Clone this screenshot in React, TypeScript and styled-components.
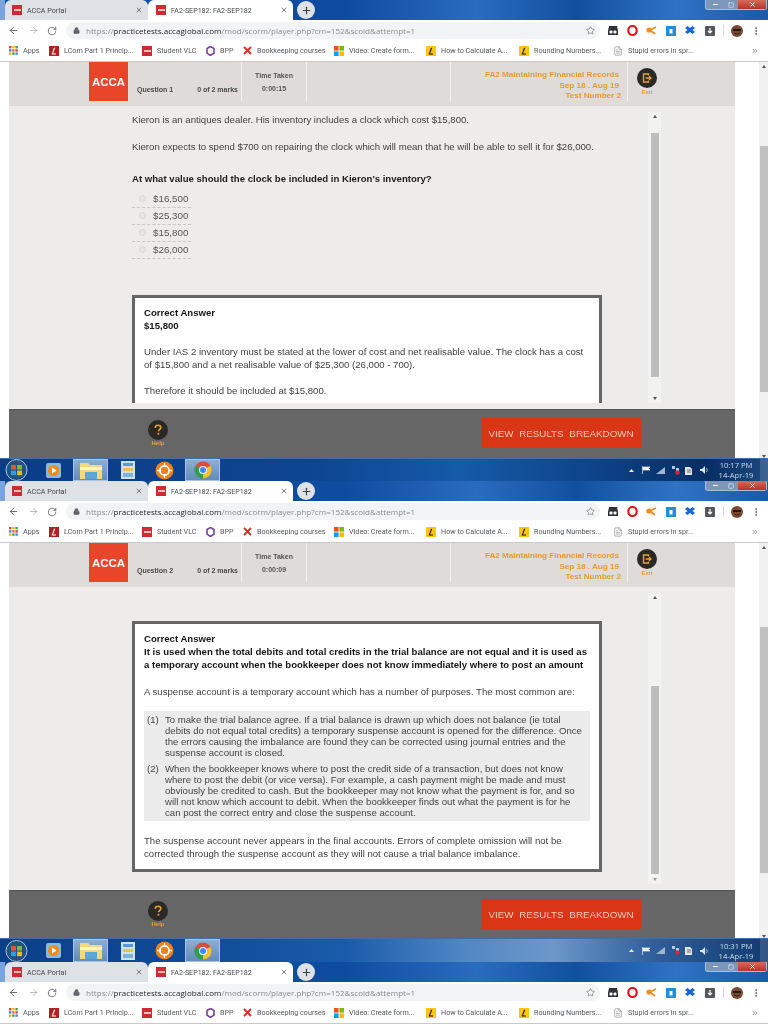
import React from "react";
import styled, { createGlobalStyle } from "styled-components";
import { ArrowLeft, ArrowRight, RotateCw, Lock, Star, Plus, X, FileText, MoreVertical, ChevronsRight, Minus, Square } from "lucide-react";

const Global = createGlobalStyle`
  html, body { margin: 0; padding: 0; background: #fff; }
  * { box-sizing: border-box; }
`;
const Screen = styled.div`
  width: 768px; height: 1024px; overflow: hidden; display: flex; flex-direction: column;
  font-family: "Liberation Sans", Arial, sans-serif; filter: blur(0.35px);
`;
const Shot = styled.section<{ $h: number }>`
  height: ${p => p.$h}px; flex: none; display: flex; flex-direction: column; background: #fff;
`;
const TabStrip = styled.div`
  height: 20px; flex: none; display: flex; align-items: stretch; padding-left: 5px;
  background: linear-gradient(90deg, #0c4ea5 0%, #0f4c9f 45%, #2a6cc0 62%, #12509f 75%, #2f72c4 88%, #1c5aa8 100%);
  box-shadow: inset 5px 0 0 #7ba4dc;
`;
const Tab = styled.div<{ $active?: boolean }>`
  width: ${p => (p.$active ? 145 : 143)}px; display: flex; align-items: center; gap: 5px; padding: 0 5px 0 ${p => (p.$active ? 8 : 7)}px;
  background: ${p => (p.$active ? "#fff" : "#dee1e6")}; border-radius: 6px 6px 0 0; color: #45484d;
  font: 7.1px Roboto, sans-serif;
`;
const Favicon = styled.span`
  width: 10px; height: 10px; background: #d02a33; flex: none; display: flex; align-items: center; justify-content: center;
  &::after { content: ""; width: 7px; height: 2px; background: #f3c0c0; }
`;
const TabTitle = styled.span` flex: 1; white-space: nowrap; overflow: hidden; `;
const NewTab = styled.span`
  width: 18px; height: 18px; margin: 1px 0 0 4px; border-radius: 50%; background: #dee1e6; display: flex; align-items: center; justify-content: center; color: #3c4043;
`;
const WinControls = styled.div`
  margin-left: auto; margin-right: 1px; width: 62px; height: 10px; display: flex; border: 1px solid #a9bdd6; border-top: 0; border-radius: 0 0 3px 3px; color: #fff; background: #7d97bb;
`;
const WinBtn = styled.span<{ $close?: boolean; $w: number }>`
  width: ${p => p.$w}px; display: flex; align-items: center; justify-content: center;
  background: ${p => (p.$close ? "linear-gradient(#d86a5e,#b8322a)" : "transparent")};
`;
const Toolbar = styled.div`
  height: 21px; flex: none; display: flex; align-items: center; background: #fff; padding-left: 8px; position: relative; color: #5f6368;
`;
const NavBtn = styled.span<{ $w: number; $faint?: boolean }>`
  width: ${p => p.$w}px; flex: none; display: flex; color: ${p => (p.$faint ? "#b5b8bc" : "#5f6368")};
`;
const Omnibox = styled.div`
  width: 534px; height: 17px; margin-left: -1px; flex: none; background: #f1f3f4; border-radius: 9px; display: flex; align-items: center; padding: 0 5px 0 7px; color: #5f6368;
  font: 8px "Open Sans", sans-serif; letter-spacing: 0.04px; white-space: nowrap;
`;
const Url = styled.span` margin-left: 6px; flex: 1; color: #8a8d91; `;
const Host = styled.span` color: #26282b; `;
const ExtIcons = styled.div`
  flex: 1; display: flex; align-items: center; height: 100%;
`;
const Ext = styled.span<{ $ml: number }>` margin-left: ${p => p.$ml}px; display: flex; flex: none; `;
const ExtDivider = styled.span` width: 1px; height: 11px; background: #d8d8d8; margin-left: 8px; flex: none; `;
const Bookmarks = styled.div`
  height: 21px; flex: none; display: flex; align-items: center; padding-left: 9px; background: #fff; border-bottom: 1px solid #c9c9c9;
  font: 7.2px Roboto, sans-serif; color: #55585c; padding-bottom: 1px;
`;
const Bookmark = styled.div<{ $w: number }>`
  width: ${p => p.$w}px; flex: none; display: flex; align-items: center; gap: 5px; white-space: nowrap; overflow: hidden;
`;
const More = styled.span` margin-left: auto; margin-right: 9px; display: flex; color: #66696d; `;
const Viewport = styled.div`
  flex: 1; min-height: 0; display: flex; padding-left: 9px;
`;
const Page = styled.div`
  width: 726px; flex: none; display: flex; flex-direction: column;
`;
const Gutter = styled.div` width: 24px; flex: none; `;
const OuterTrack = styled.div`
  width: 9px; flex: none; background: #f1f1f1; display: flex; flex-direction: column; align-items: center; padding-top: 3px;
`;
const Arrow = styled.span<{ $down?: boolean; $light?: boolean }>`
  width: 0; height: 0; flex: none; border-left: 2.5px solid transparent; border-right: 2.5px solid transparent;
  ${p => (p.$down ? `border-top: 3px solid ${p.$light ? "#999" : "#555"};` : `border-bottom: 3px solid #555;`)}
`;
const OuterThumb = styled.div<{ $top: number }>`
  width: 8px; height: 246px; margin-top: ${p => p.$top}px; margin-left: 1px; background: #c0c0c0;
`;
const HeaderBar = styled.header`
  height: 44px; flex: none; background: #dedbd8; display: flex; padding-left: 80px;
`;
const Logo = styled.div`
  width: 39px; height: 39px; background: #e9452a; color: #fff; display: flex; align-items: center; justify-content: center;
  font: bold 11.5px "Liberation Sans", sans-serif; flex: none;
`;
const QuestionInfo = styled.div`
  width: 114px; height: 39px; flex: none; display: flex; justify-content: space-between; padding: 23px 3px 0 9px; color: #4a4a4a;
  font: bold 7px/9px "Liberation Sans", sans-serif; border-right: 1px solid #f3f1ef; white-space: nowrap;
`;
const TimeBox = styled.div`
  width: 65px; height: 39px; flex: none; border-right: 1px solid #f3f1ef; text-align: center; padding-top: 7px; color: #555;
  font: bold 7px/13px "Liberation Sans", sans-serif; white-space: nowrap;
`;
const HeaderGap = styled.div` width: 144px; height: 39px; flex: none; border-right: 1px solid #f3f1ef; `;
const Course = styled.div`
  width: 177px; height: 39px; flex: none; border-right: 1px solid #f3f1ef; text-align: right; padding: 8px 6px 0 0; color: #e79a2e;
  font: bold 8.1px/10.5px "Liberation Sans", sans-serif; white-space: nowrap;
`;
const CourseLine = styled.div<{ $pad: number }>` padding-right: ${p => p.$pad}px; `;
const RoundAction = styled.div`
  display: flex; flex-direction: column; align-items: center; color: #e9a12c; font: bold 6px/7px "Liberation Sans", sans-serif;
`;
const ExitWrap = styled(RoundAction)` margin-left: 9px; padding-top: 6px; line-height: 9px; `;
const Circle = styled.span`
  width: 20px; height: 20px; border-radius: 50%; background: #2a2926; display: flex; align-items: center; justify-content: center;
`;
const Body = styled.div`
  height: 303px; flex: none; background: #edecea; display: flex;
`;
const Content = styled.div<{ $h: number }>`
  width: 640px; height: ${p => p.$h}px; overflow: hidden; flex: none; padding-left: 123px; padding-top: 7px;
  font: 9.6px/13px "Liberation Sans", sans-serif; color: #3f3f3f; white-space: nowrap;
`;
const Para = styled.p<{ $mt?: number }>` margin: ${p => p.$mt ?? 0}px 0 0; `;
const Lead = styled.p` margin: 19px 0 0; font-weight: bold; color: #1c1c1c; `;
const Options = styled.div` margin-top: 6px; width: 59px; `;
const Option = styled.label`
  height: 17px; display: flex; align-items: center; gap: 7px; padding: 0 0 2px 7px; border-bottom: 1px dashed #c6c6c6; color: #555; font-size: 9.8px;
`;
const Radio = styled.span` width: 7px; height: 7px; border-radius: 50%; border: 1px solid #d6d6d6; background: #e6e6e6; flex: none; `;
const AnswerBox = styled.div<{ $mt: number }>`
  width: 470px; margin-top: ${p => p.$mt}px; border: 3px solid #666; background: #fff; padding: 8px 9px 9px;
`;
const Strong = styled.div` font-weight: bold; color: #161616; `;
const NoteList = styled.ol`
  list-style: none; margin: 13px 0 0; padding: 3px; background: #ebebeb; font-size: 9.6px; line-height: 11px; color: #444;
`;
const Note = styled.li`
  display: flex; gap: 6px; & + & { margin-top: 5px; }
`;
const NoteNum = styled.span` width: 12px; flex: none; `;
const InnerTrack = styled.div`
  width: 13px; height: 291px; margin: 6px 0 0 -1px; flex: none; background: #f2f2f1; display: flex; flex-direction: column; align-items: center; padding: 3px 0;
`;
const InnerThumb = styled.div<{ $top: number; $h: number }>`
  width: 8px; height: ${p => p.$h}px; margin-top: ${p => p.$top}px; background: #bdbdbd; flex: none;
`;
const Spacer = styled.div` margin-top: auto; `;
const Footer = styled.footer`
  flex: 1; min-height: 0; background: #666; border-top: 1px solid #555; display: flex; padding: 8px 0 0 139px;
`;
const HelpWrap = styled(RoundAction)` width: 20px; padding-top: 2px; `;
const ResultsBtn = styled.button`
  width: 160px; height: 30px; margin-left: 313px; border: 0; border-radius: 1px; background: #d93516; color: #f4c9b9; padding: 0;
  font: 9.8px "Liberation Sans", sans-serif; word-spacing: 3px; white-space: nowrap;
`;
const Taskbar = styled.div<{ $h: number; $bright?: boolean }>`
  height: ${p => p.$h}px; flex: none; display: flex; align-items: center; padding-left: 5px; border-top: 1px solid #3f6fa8;
  background: ${p =>
    p.$bright
      ? "linear-gradient(90deg,#0c3f8a 0%,#0f4a98 25%,#1a5cab 45%,#4f86c4 60%,#6c98c9 72%,#2f5f9c 85%,#123b70 100%)"
      : "linear-gradient(90deg,#0b3d87 0%,#0d4491 40%,#155ba8 60%,#0d4288 78%,#062e63 92%,#1d4a80 100%)"};
`;
const Orb = styled.span` width: 23px; height: 22px; flex: none; display: flex; `;
const TaskSlot = styled.span<{ $w: number; $ml: number; $active?: boolean }>`
  width: ${p => p.$w}px; height: 100%; margin-left: ${p => p.$ml}px; flex: none; display: flex; align-items: center; justify-content: center;
  ${p => p.$active && "background: linear-gradient(#8fb0d4,#5f8abb); box-shadow: inset 0 0 0 1px #a9c4e0;"}
`;
const Tray = styled.div`
  margin-left: auto; display: flex; align-items: center; height: 100%; color: #dfe8f2;
`;
const TrayIcon = styled.span<{ $ml: number }>` width: 10px; margin-left: ${p => p.$ml}px; display: flex; justify-content: center; flex: none; `;
const Clock = styled.div`
  width: 38px; margin-left: 8px; text-align: center; color: #cfdded; font: 7.6px/10px "Open Sans", sans-serif; white-space: nowrap;
`;
const ShowDesktop = styled.span` width: 8px; height: 100%; margin-left: 5px; background: rgba(255,255,255,.14); flex: none; `;

const LetterTile = ({ bg, fg = "#111" }: { bg: string; fg?: string }) => (
  <svg width="10" height="10" viewBox="0 0 10 10"><rect width="10" height="10" fill={bg} /><path d="M6.3 1.8 4 7.6h3v.9H2.6L5 1.8z" fill={fg} /></svg>
);
const AppsIcon = () => (
  <svg width="9" height="9" viewBox="0 0 9 9">
    {["#d9453c", "#f0b400", "#3aa655", "#4285f4", "#e06b2f", "#d9453c", "#f0b400", "#3aa655", "#4285f4"].map((c, i) => (
      <rect key={i} x={(i % 3) * 3.2} y={Math.floor(i / 3) * 3.2} width="2.4" height="2.4" fill={c} />
    ))}
  </svg>
);
const BppIcon = () => (
  <svg width="9" height="10" viewBox="0 0 9 10"><path d="M4.5.5 8 2.5v4.6L4.5 9.5 1 7.1V2.5z" fill="none" stroke="#7b3fa0" strokeWidth="1.6" /></svg>
);
const RedX = () => (
  <svg width="9" height="9" viewBox="0 0 9 9"><path d="M1 1l7 7M8 1 1 8" stroke="#d9342b" strokeWidth="2" /></svg>
);
const WinLogo = () => (
  <svg width="10" height="10" viewBox="0 0 10 10">
    <rect width="4.6" height="4.6" fill="#f25022" /><rect x="5.4" width="4.6" height="4.6" fill="#7fba00" />
    <rect y="5.4" width="4.6" height="4.6" fill="#00a4ef" /><rect x="5.4" y="5.4" width="4.6" height="4.6" fill="#ffb900" />
  </svg>
);

const bookmarks: [number, React.ReactNode, string][] = [
  [40, <AppsIcon />, "Apps"],
  [93, <LetterTile bg="#b3201f" fg="#fff" />, "LCom Part 1 Princip..."],
  [64, <Favicon />, "Student VLC"],
  [37, <BppIcon />, "BPP"],
  [91, <RedX />, "Bookkeeping courses"],
  [92, <WinLogo />, "Video: Create form..."],
  [93, <LetterTile bg="#ffc60b" />, "How to Calculate A..."],
  [94, <LetterTile bg="#ffc60b" />, "Rounding Numbers..."],
  [100, <FileText size={10} strokeWidth={1.2} color="#666" />, "Stupid errors in spr..."],
];

const Chrome = () => (
  <>
    <TabStrip>
      <Tab><Favicon /><TabTitle>ACCA Portal</TabTitle><X size={8} strokeWidth={2.5} color="#666" /></Tab>
      <Tab $active><Favicon /><TabTitle>FA2-SEP182: FA2-SEP182</TabTitle><X size={8} strokeWidth={2.5} color="#666" /></Tab>
      <NewTab><Plus size={11} strokeWidth={2.5} /></NewTab>
      <WinControls>
        <WinBtn $w={18}><Minus size={7} strokeWidth={3} /></WinBtn>
        <WinBtn $w={14}><Square size={6} strokeWidth={2} /></WinBtn>
        <WinBtn $w={28} $close><X size={7} strokeWidth={3} /></WinBtn>
      </WinControls>
    </TabStrip>
    <Toolbar>
      <NavBtn $w={20}><ArrowLeft size={11} strokeWidth={2} /></NavBtn>
      <NavBtn $w={19} $faint><ArrowRight size={11} strokeWidth={2} /></NavBtn>
      <NavBtn $w={20}><RotateCw size={10} strokeWidth={2} /></NavBtn>
      <Omnibox>
        <Lock size={7} fill="#5f6368" strokeWidth={2} />
        <Url>https://<Host>practicetests.accaglobal.com</Host>/mod/scorm/player.php?cm=152&amp;scoid&amp;attempt=1</Url>
        <Star size={9} strokeWidth={1.6} />
      </Omnibox>
      <ExtIcons>
        <Ext $ml={8}><svg width="10" height="9" viewBox="0 0 10 9"><path d="M1 0h8l1 5v4H0V5z" fill="#2f3337" /><rect x="1.5" y="4.5" width="3" height="3" rx="1" fill="#fff" /><rect x="5.5" y="4.5" width="3" height="3" rx="1" fill="#fff" /></svg></Ext>
        <Ext $ml={9}><svg width="11" height="11" viewBox="0 0 11 11"><ellipse cx="5.5" cy="5.5" rx="4.2" ry="4.5" fill="none" stroke="#e0161c" strokeWidth="2.2" /></svg></Ext>
        <Ext $ml={8}><svg width="11" height="10" viewBox="0 0 11 10"><circle cx="3" cy="4" r="2.6" fill="#ef8d1f" /><path d="M4 4l6-3M5 5l4 3" stroke="#ef8d1f" strokeWidth="1.8" /></svg></Ext>
        <Ext $ml={9}><svg width="10" height="10" viewBox="0 0 10 10"><rect width="10" height="10" fill="#1f8fe0" /><rect x="3.5" y="3" width="3" height="4.5" fill="#fff" /></svg></Ext>
        <Ext $ml={9}><svg width="10" height="9" viewBox="0 0 10 9"><path d="M0 2 2.5 0 5 2 7.5 0 10 2 7.5 4 10 6 7.5 8 5 6 2.5 8 0 6l2.5-2z" fill="#1565d8" /></svg></Ext>
        <Ext $ml={10}><svg width="10" height="10" viewBox="0 0 10 10"><rect width="10" height="10" rx="1" fill="#55585a" /><path d="M5 2v4M3 5l2 2 2-2" stroke="#fff" strokeWidth="1.2" fill="none" /></svg></Ext>
        <ExtDivider />
        <Ext $ml={7}><svg width="12" height="12" viewBox="0 0 12 12"><circle cx="6" cy="6" r="6" fill="#7a4a30" /><rect x="2" y="4" width="8" height="2" fill="#241a16" /><path d="M3 8q3 2 6 0" stroke="#3a221a" fill="none" /></svg></Ext>
        <Ext $ml={8}><MoreVertical size={10} strokeWidth={2.2} /></Ext>
      </ExtIcons>
    </Toolbar>
    <Bookmarks>
      {bookmarks.map(([w, icon, label]) => (
        <Bookmark key={label} $w={w}>{icon}<span>{label}</span></Bookmark>
      ))}
      <More><ChevronsRight size={8} strokeWidth={2} /></More>
    </Bookmarks>
  </>
);

const HeaderRow = ({ q, time }: { q: number; time: string }) => (
  <HeaderBar>
    <Logo>ACCA</Logo>
    <QuestionInfo><span>Question {q}</span><span>0 of 2 marks</span></QuestionInfo>
    <TimeBox>Time Taken<br />{time}</TimeBox>
    <HeaderGap />
    <Course>
      <CourseLine $pad={2}>FA2 Maintaining Financial Records</CourseLine>
      <CourseLine $pad={2}>Sep 18 . Aug 19</CourseLine>
      <CourseLine $pad={0}>Test Number 2</CourseLine>
    </Course>
    <ExitWrap>
      <Circle><svg width="10" height="10" viewBox="0 0 10 10"><path d="M6.5 2.5V1H1.5v8h5V7.5M3.5 5H9M7 3.2 9 5 7 6.8" fill="none" stroke="#e9a12c" strokeWidth="1.4" /></svg></Circle>
      Exit
    </ExitWrap>
  </HeaderBar>
);

const FooterRow = () => (
  <Footer>
    <HelpWrap>
      <Circle><svg width="10" height="12" viewBox="0 0 10 12"><path d="M2.2 3.8C2.4 1.9 3.6 1.2 5 1.2c1.7 0 2.8 1 2.8 2.4 0 1.8-2.4 2-2.4 3.7" fill="none" stroke="#e9a12c" strokeWidth="1.6" /><rect x="4.5" y="8.8" width="1.8" height="1.8" fill="#e9a12c" /></svg></Circle>
      Help
    </HelpWrap>
    <ResultsBtn>VIEW RESULTS BREAKDOWN</ResultsBtn>
  </Footer>
);

const Frame = ({ q, time, outerTop, innerTop, innerH, clip, children }: { q: number; time: string; outerTop: number; innerTop: number; innerH: number; clip: number; children: React.ReactNode }) => (
  <Viewport>
    <Page>
      <HeaderRow q={q} time={time} />
      <Body>
        <Content $h={clip}>{children}</Content>
        <InnerTrack>
          <Arrow />
          <InnerThumb $top={innerTop} $h={innerH} />
          <Spacer />
          <Arrow $down $light={q === 2} />
        </InnerTrack>
      </Body>
      <FooterRow />
    </Page>
    <Gutter />
    <OuterTrack>
      <Arrow />
      <OuterThumb $top={outerTop} />
      <Spacer />
      <Arrow $down />
    </OuterTrack>
  </Viewport>
);

const TaskbarRow = ({ h, time, bright }: { h: number; time: string; bright?: boolean }) => (
  <Taskbar $h={h} $bright={bright}>
    <Orb>
      <svg width="23" height="22" viewBox="0 0 23 22">
        <circle cx="11.5" cy="11" r="10.5" fill="#24527f" stroke="#a8c6e0" />
        <rect x="6" y="6" width="5" height="4.6" fill="#e8542c" /><rect x="12" y="6" width="5" height="4.6" fill="#7fba2e" />
        <rect x="6" y="11.6" width="5" height="4.6" fill="#2f9de0" /><rect x="12" y="11.6" width="5" height="4.6" fill="#f2b51d" />
      </svg>
    </Orb>
    <TaskSlot $w={16} $ml={17}>
      <svg width="15" height="15" viewBox="0 0 15 15"><rect width="15" height="15" rx="2" fill="#8fb8d8" /><circle cx="7.5" cy="7.5" r="5.5" fill="#f08a1d" /><path d="M6 4.5 10.5 7.5 6 10.5z" fill="#fff" /></svg>
    </TaskSlot>
    <TaskSlot $w={35} $ml={12} $active>
      <svg width="26" height="19" viewBox="0 0 26 19"><path d="M2 2h8l2 2h12v14H2z" fill="#f4d87a" /><rect x="2" y="6" width="22" height="3" fill="#fff4c4" /><rect x="7" y="11" width="12" height="7" fill="#5aa7d8" /></svg>
    </TaskSlot>
    <TaskSlot $w={15} $ml={12}>
      <svg width="14" height="18" viewBox="0 0 14 18"><rect width="14" height="18" fill="#cfe2ee" /><rect x="2" y="2" width="10" height="3" fill="#5d9ac8" /><rect x="2" y="7" width="10" height="3" fill="#efc24f" /><rect x="2" y="12" width="10" height="4" fill="#7fb4d6" /></svg>
    </TaskSlot>
    <TaskSlot $w={19} $ml={20}>
      <svg width="19" height="19" viewBox="0 0 19 19"><circle cx="9.5" cy="9.5" r="9" fill="#f0821e" /><circle cx="9.5" cy="9.5" r="4.6" fill="none" stroke="#fff" strokeWidth="1.6" /><path d="M9.5 2v4M9.5 13v4M2 9.5h4M13 9.5h4" stroke="#fff" strokeWidth="1.4" /></svg>
    </TaskSlot>
    <TaskSlot $w={35} $ml={11} $active>
      <svg width="18" height="18" viewBox="0 0 18 18">
        <circle cx="9" cy="9" r="8.5" fill="#dd4b3e" /><path d="M9 9 16.4 4.8A8.5 8.5 0 0 1 9 17.5z" fill="#f2c230" /><path d="M9 9 9 17.5A8.5 8.5 0 0 1 1.6 4.8z" fill="#2e9e4f" />
        <circle cx="9" cy="9" r="4" fill="#fff" /><circle cx="9" cy="9" r="3" fill="#4285f4" />
      </svg>
    </TaskSlot>
    <Tray>
      <TrayIcon $ml={0}><svg width="5" height="3" viewBox="0 0 5 3"><path d="M0 3 2.5 0 5 3z" fill="#eaf0f6" /></svg></TrayIcon>
      <TrayIcon $ml={5}><svg width="9" height="8" viewBox="0 0 9 8"><path d="M.5 0v8M1 1h7L6.5 2.5 8 4H1z" stroke="#eee" strokeWidth=".7" fill="#eee" /></svg></TrayIcon>
      <TrayIcon $ml={4}><svg width="9" height="7" viewBox="0 0 9 7"><path d="M0 7 9 0v7z" fill="#9fb6cf" /></svg></TrayIcon>
      <TrayIcon $ml={6}><svg width="8" height="9" viewBox="0 0 8 9"><rect width="3" height="3" fill="#b9c9da" /><rect x="4" y="2" width="3" height="3" fill="#b9c9da" /><circle cx="5.5" cy="6.5" r="2.2" fill="#e0262c" /></svg></TrayIcon>
      <TrayIcon $ml={2}><svg width="9" height="9" viewBox="0 0 9 9"><path d="M1 1h5l2 2v6H1z" fill="#e6e6e6" /><path d="M3 4h4M3 6h4" stroke="#667" /></svg></TrayIcon>
      <TrayIcon $ml={6}><svg width="9" height="8" viewBox="0 0 9 8"><path d="M0 3h2l3-3v8L2 5H0z" fill="#dfe7ef" /><path d="M6.5 2q1.5 2 0 4" stroke="#9fb6cf" fill="none" /></svg></TrayIcon>
      <Clock>{time}<br />14-Apr-19</Clock>
      <ShowDesktop />
    </Tray>
  </Taskbar>
);

export default function App() {
  return (
    <>
      <Global />
      <Screen>
        <Shot $h={458}>
          <Chrome />
          <Frame q={1} time="0:00:15" outerTop={78} innerTop={15} innerH={244} clip={297}>
            <Para>Kieron is an antiques dealer. His inventory includes a clock which cost $15,800.</Para>
            <Para $mt={14}>Kieron expects to spend $700 on repairing the clock which will mean that he will be able to sell it for $26,000.</Para>
            <Lead>At what value should the clock be included in Kieron's inventory?</Lead>
            <Options>
              {["$16,500", "$25,300", "$15,800", "$26,000"].map(v => (
                <Option key={v}><Radio />{v}</Option>
              ))}
            </Options>
            <AnswerBox $mt={36}>
              <Strong>Correct Answer<br />$15,800</Strong>
              <Para $mt={13}>Under IAS 2 inventory must be stated at the lower of cost and net realisable value. The clock has a cost<br />of $15,800 and a net realisable value of $25,300 (26,000 - 700).</Para>
              <Para $mt={13}>Therefore it should be included at $15,800.</Para>
            </AnswerBox>
          </Frame>
        </Shot>
        <TaskbarRow h={23} time="10:17 PM" />
        <Shot $h={457}>
          <Chrome />
          <Frame q={2} time="0:00:09" outerTop={78} innerTop={87} innerH={188} clip={297}>
            <AnswerBox $mt={27}>
              <Strong>Correct Answer<br />It is used when the total debits and total credits in the trial balance are not equal and it is used as<br />a temporary account when the bookkeeper does not know immediately where to post an amount</Strong>
              <Para $mt={14}>A suspense account is a temporary account which has a number of purposes. The most common are:</Para>
              <NoteList>
                <Note><NoteNum>(1)</NoteNum><span>To make the trial balance agree. If a trial balance is drawn up which does not balance (ie total<br />debits do not equal total credits) a temporary suspense account is opened for the difference. Once<br />the errors causing the imbalance are found they can be corrected using journal entries and the<br />suspense account is closed.</span></Note>
                <Note><NoteNum>(2)</NoteNum><span>When the bookkeeper knows where to post the credit side of a transaction, but does not know<br />where to post the debit (or vice versa). For example, a cash payment might be made and must<br />obviously be credited to cash. But the bookkeeper may not know what the payment is for, and so<br />will not know which account to debit. When the bookkeeper finds out what the payment is for he<br />can post the correct entry and close the suspense account.</span></Note>
              </NoteList>
              <Para $mt={13}>The suspense account never appears in the final accounts. Errors of complete omission will not be<br />corrected through the suspense account as they will not cause a trial balance imbalance.</Para>
            </AnswerBox>
          </Frame>
        </Shot>
        <TaskbarRow h={24} time="10:31 PM" bright />
        <Shot $h={62}>
          <Chrome />
        </Shot>
      </Screen>
    </>
  );
}
